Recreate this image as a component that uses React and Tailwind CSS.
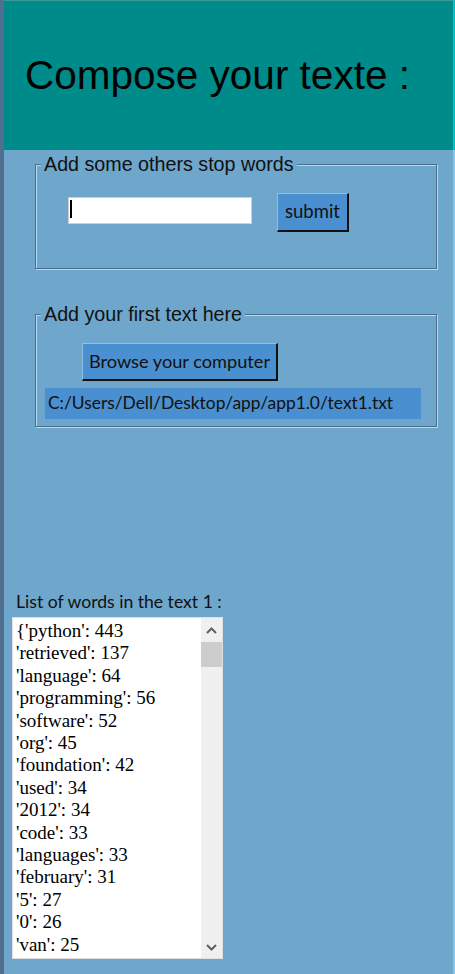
import React from "react";

const words = [
  "{'python': 443",
  "'retrieved': 137",
  "'language': 64",
  "'programming': 56",
  "'software': 52",
  "'org': 45",
  "'foundation': 42",
  "'used': 34",
  "'2012': 34",
  "'code': 33",
  "'languages': 33",
  "'february': 31",
  "'5': 27",
  "'0': 26",
  "'van': 25",
];

function Chevron({ up }) {
  return (
    <svg width="11" height="7" viewBox="0 0 11 7">
      <polyline
        points={up ? "1,6 5.5,1.5 10,6" : "1,1 5.5,5.5 10,1"}
        fill="none"
        stroke="#606060"
        strokeWidth="2"
      />
    </svg>
  );
}

const ui = { fontFamily: "Lato, 'Noto Sans', sans-serif" };
const arial = { fontFamily: "'Liberation Sans', Arial, sans-serif" };

export default function App() {
  return (
    <div className="flex w-[455px] h-[974px] bg-[#6ea6cc] overflow-hidden">
      <div className="w-[4px] shrink-0 bg-[#506f8f]" />
      <div className="flex-1 flex flex-col">
        <div
          className="h-[150px] shrink-0 bg-[#008b8b] border-t border-t-[#3a9999] border-r-2 border-r-[#00c4cc] flex items-center pl-[21px]"
          style={arial}
        >
          <span className="text-[40.5px] leading-none text-black">Compose your texte :</span>
        </div>
        <div className="flex-1 flex flex-col border-r-2 border-r-[#86c6ec]">
          {/* Group 1 */}
          <div className="mt-[14px] ml-[31px] w-[402px] h-[105px] border border-[#4b6d88] shadow-[inset_1px_1px_0_#b4dbf3,1px_1px_0_#b4dbf3] flex flex-col">
            <span
              className="self-start -mt-[12px] ml-[5px] px-[3px] h-[22px] leading-[22px] bg-[#6ea6cc] text-[19.7px] text-[#111]"
              style={arial}
            >
              Add some others stop words
            </span>
            <div className="mt-[18px] ml-[32px] flex items-start gap-[25px]">
              <div className="mt-[4px] h-[27px] w-[184px] bg-white border border-[#cfcfcf] flex items-start pt-[2px] pl-[1px]">
                <span className="w-[2px] h-[18px] bg-black" />
              </div>
              <div
                className="h-[39px] w-[72px] bg-[#4a8fcf] border-t border-l border-t-[#8dbfe9] border-l-[#8dbfe9] border-r-2 border-b-2 border-r-[#111] border-b-[#111] flex items-center justify-center text-[18.5px] text-[#111]"
                style={ui}
              >
                submit
              </div>
            </div>
          </div>

          {/* Group 2 */}
          <div className="mt-[45px] ml-[31px] w-[402px] h-[113px] border border-[#4b6d88] shadow-[inset_1px_1px_0_#b4dbf3,1px_1px_0_#b4dbf3] flex flex-col">
            <span
              className="self-start -mt-[12px] ml-[5px] px-[3px] h-[22px] leading-[22px] bg-[#6ea6cc] text-[19.7px] text-[#111]"
              style={arial}
            >
              Add your first text here
            </span>
            <div
              className="mt-[18px] ml-[46px] w-[196px] h-[38px] bg-[#4a8fcf] border-t border-l border-t-[#8dbfe9] border-l-[#8dbfe9] border-r-2 border-b-2 border-r-[#111] border-b-[#111] flex items-center justify-center text-[18.2px] text-[#111]"
              style={ui}
            >
              Browse your computer
            </div>
            <div
              className="mt-[7px] ml-[9px] w-[376px] h-[31px] bg-[#4a8fcf] flex items-center pl-[3px] text-[17.4px] text-[#111]"
              style={ui}
            >
              C:/Users/Dell/Desktop/app/app1.0/text1.txt
            </div>
          </div>

          {/* List label */}
          <div className="mt-[165px] ml-[12px] h-[20px] leading-[20px] text-[17.6px] text-[#111]" style={ui}>
            List of words in the text 1 :
          </div>

          {/* Listbox */}
          <div className="mt-[5px] ml-[8px] w-[211px] h-[342px] bg-white border border-[#e0e0e0] flex">
            <div
              className="flex-1 overflow-hidden pl-[3px] pt-[2px] text-[19px] leading-[22.4px] text-black whitespace-nowrap"
              style={{ fontFamily: "'Liberation Serif', 'Times New Roman', serif" }}
            >
              {words.map((w) => (
                <div key={w}>{w}</div>
              ))}
            </div>
            <div className="w-[21px] shrink-0 bg-[#f0f0f0] flex flex-col">
              <div className="h-[24px] flex items-center justify-center">
                <Chevron up />
              </div>
              <div className="h-[25px] bg-[#cdcdcd]" />
              <div className="flex-1" />
              <div className="h-[21px] flex items-center justify-center">
                <Chevron />
              </div>
            </div>
          </div>
        </div>
      </div>
    </div>
  );
}
